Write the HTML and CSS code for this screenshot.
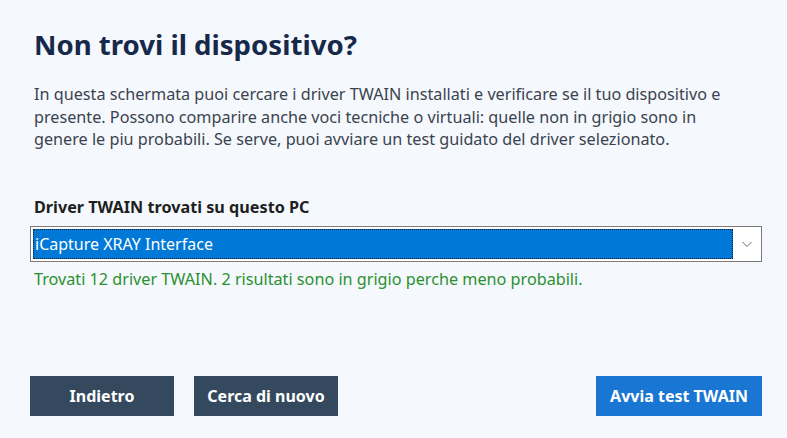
FILE: index.html
```html
<!DOCTYPE html>
<html lang="it">
<head>
<meta charset="utf-8">
<link rel="stylesheet" href="styles.css">
</head>
<body>
<div class="page">
  <h1 class="title">Non trovi il dispositivo?</h1>
  <p class="intro">In questa schermata puoi cercare i driver TWAIN installati e verificare se il tuo dispositivo e presente. Possono comparire anche voci tecniche o virtuali: quelle non in grigio sono in genere le piu probabili. Se serve, puoi avviare un test guidato del driver selezionato.</p>
  <div class="field">
    <div class="label">Driver TWAIN trovati su questo PC</div>
    <div class="select">
      <div class="selected">iCapture XRAY Interface</div>
      <svg class="chev" width="12" height="8" viewBox="0 0 12 8"><path d="M1.5 2 L6 6.5 L10.5 2" fill="none" stroke="#666" stroke-width="1"/></svg>
    </div>
    <div class="status">Trovati 12 driver TWAIN. 2 risultati sono in grigio perche meno probabili.</div>
  </div>
  <div class="spacer"></div>
  <div class="actions">
    <button class="btn dark">Indietro</button>
    <button class="btn dark">Cerca di nuovo</button>
    <div class="grow"></div>
    <button class="btn primary">Avvia test TWAIN</button>
  </div>
</div>
</body>
</html>
```

FILE: styles.css
```css
html, body {
  margin: 0;
  height: 100%;
  background: #f5f8fc;
}
body {
  font-family: "Noto Sans", "Open Sans", sans-serif;
  color: #33404f;
}
.page {
  box-sizing: border-box;
  height: 438px;
  padding: 25px 25px 22px 30px;
  display: flex;
  flex-direction: column;
}
.title {
  margin: 0 0 0 4px;
  font-size: 27.6px;
  font-weight: 700;
  color: #17294a;
  line-height: 38px;
}
.intro {
  margin: 20px 0 0 4px;
  font-size: 16.2px;
  line-height: 22.5px;
  color: #3a4350;
  max-width: 690px;
}
.field {
  margin-top: 45px;
}
.label {
  margin-left: 4px;
  font-size: 16.2px;
  font-weight: 700;
  color: #1d1f22;
  line-height: 22px;
}
.select {
  margin-top: 8px;
  height: 36px;
  box-sizing: border-box;
  border: 1px solid #7a7a7a;
  background: #fff;
  display: flex;
  align-items: center;
  padding: 2px;
}
.selected {
  flex: 1;
  height: 100%;
  background: #0078d7;
  color: #fff;
  font-size: 16px;
  line-height: 30px;
  padding-left: 2px;
  outline: 1px dotted #222;
  outline-offset: -1px;
}
.chev {
  margin: 0 6px 0 8px;
}
.status {
  margin: 6px 0 0 4px;
  font-size: 16.2px;
  line-height: 22px;
  color: #2b9030;
}
.spacer { flex: 1; }
.actions {
  display: flex;
  gap: 20px;
}
.grow { flex: 1; }
.btn {
  height: 40px;
  border: 0;
  color: #fff;
  font-family: "Noto Sans", "Open Sans", sans-serif;
  font-size: 16px;
  font-weight: 700;
  padding: 0;
  width: 144px;
}
.dark { background: #34495e; }
.primary { background: #1976d2; width: 166px; }
```
